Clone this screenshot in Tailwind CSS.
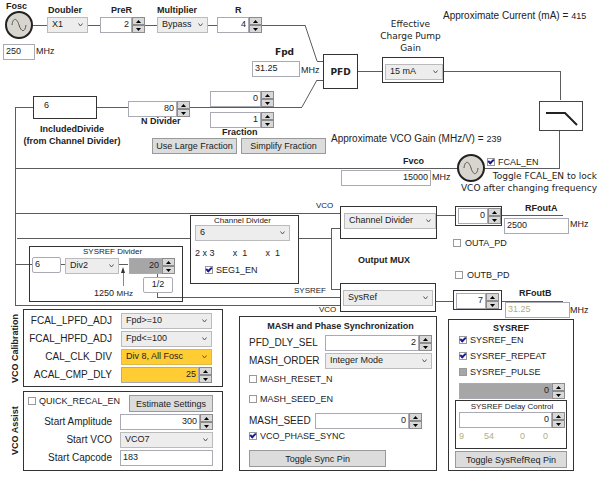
<!DOCTYPE html>
<html lang="en">
<head>
  <meta charset="UTF-8" />
  <title>PLL Configuration</title>
  <script src="https://cdn.jsdelivr.net/npm/@tailwindcss/browser@4"></script>
</head>
<body class="bg-white">
  <main class="font-['Liberation_Sans',Arial,sans-serif] text-[9px] leading-[12px] text-[#222] pb-2
    [&_select]:appearance-none [&_select]:block [&_select]:w-full [&_select]:h-[16px] [&_select]:pl-1 [&_select]:pb-[2px] [&_select]:border
    [&_input[type=text]]:block [&_input[type=text]]:min-w-0 [&_input[type=text]]:w-full [&_input[type=text]]:h-[16px] [&_input[type=text]]:px-[2px] [&_input[type=text]]:pb-[3px] [&_input[type=text]]:border [&_input[type=text]]:border-[#aaaab4]
    [&_input[type=checkbox]]:appearance-none [&_input[type=checkbox]]:shrink-0 [&_input[type=checkbox]]:size-[8px] [&_input[type=checkbox]]:border [&_input[type=checkbox]]:border-[#999]
    [&_input:checked]:before:block [&_input:checked]:before:w-[6px] [&_input:checked]:before:h-[4px] [&_input:checked]:before:border-l-2 [&_input:checked]:before:border-b-2 [&_input:checked]:before:border-[#1a1a90] [&_input:checked]:before:-rotate-45
    [&_label]:whitespace-nowrap">

    <!-- Signal path -->
    <section class="relative h-[309px]">
      <svg class="absolute left-0 top-0 overflow-visible" width="600" height="309" fill="none" stroke="#5c5c5c" shape-rendering="crispEdges">
        <path d="M32 25H217M262 25H305M317 61H323M317 80H323M358 71H382M444 71H560V100M33 107H15V305H340M97 107H128M190 107H302M15 168H458M485 168H559V130M15 213H340M17 238H190M298 238H331M340 228H331V289H340M15 264H32M61 264H65M119 264H128M157 274V297H340M436 215H455M501 215H563M436 301H453M501 301H563" />
        <path d="M305 25L317 61M302 107L317 80" shape-rendering="auto" />
        <path d="M123 286V270" stroke="#888" />
        <path d="M121 273L123 267L125 273Z" fill="#333" stroke="none" shape-rendering="auto" />
        <g shape-rendering="auto">
          <circle cx="19" cy="25" r="13" fill="#d8d4ce" stroke="#222" stroke-width="2" />
          <path d="M12 25C13 17 17 18 19 25S25 33 26 25" stroke="#555" />
          <circle cx="471" cy="168" r="13" fill="#d8d4ce" stroke="#222" stroke-width="2" />
          <path d="M464 168C465 160 469 161 471 168S477 176 478 168" stroke="#555" />
        </g>
        <rect x="539" y="101" width="43" height="29" fill="#fff" stroke="#444" />
        <path d="M546 113H565L577 125" stroke="#222" stroke-width="2" shape-rendering="auto" />
      </svg>

      <!-- Reference input -->
      <label for="fosc" class="absolute left-[6px] top-0 font-bold">Fosc</label>
      <div class="absolute left-[3px] top-[44px] w-[32px]"><input type="text" id="fosc" value="250"></div>
      <span class="absolute left-[36px] top-[45px]">MHz</span>

      <label for="doubler" class="absolute left-[48px] top-[4px] font-bold">Doubler</label>
      <div data-combo class="absolute left-[47px] top-[17px] w-[41px]"><select id="doubler" class="bg-[#ededed] border-[#bbb]"><option>X1</option><option>X2</option></select></div>

      <label for="prer" class="absolute left-[111px] top-[4px] font-bold">PreR</label>
      <div data-spin class="absolute left-[100px] top-[17px] w-[45px] flex"><input type="text" id="prer" value="2" class="text-right bg-white"></div>

      <label for="mult" class="absolute left-[157px] top-[4px] font-bold">Multiplier</label>
      <div data-combo class="absolute left-[157px] top-[17px] w-[51px]"><select id="mult" class="bg-[#ededed] border-[#bbb]"><option>Bypass</option></select></div>

      <label for="r" class="absolute left-[235px] top-[4px] font-bold">R</label>
      <div data-spin class="absolute left-[217px] top-[17px] w-[45px] flex"><input type="text" id="r" value="4" class="text-right bg-white"></div>

      <!-- Phase detector and charge pump -->
      <label for="fpd" class="absolute left-[275px] top-[46px] font-['DejaVu_Sans',sans-serif] font-bold">Fpd</label>
      <div class="absolute left-[252px] top-[61px] w-[48px]"><input type="text" id="fpd" value="31.25"></div>
      <span class="absolute left-[301px] top-[64px]">MHz</span>
      <div class="absolute left-[323px] top-[54px] w-[35px] h-[35px] border border-[#333] flex items-center justify-center font-['DejaVu_Sans',sans-serif] font-bold">PFD</div>

      <label for="cpg" class="absolute left-[378px] top-[18px] w-[65px] text-center font-['DejaVu_Sans',sans-serif]">Effective<br>Charge Pump<br>Gain</label>
      <div class="absolute left-[382px] top-[57px] w-[62px] h-[26px] border border-[#333] pl-[2px] pt-[6px]">
        <div data-combo class="relative"><select id="cpg" class="bg-[#ededed] border-[#bbb]"><option>15 mA</option></select></div>
      </div>
      <p class="absolute left-[443px] top-[10px] flex gap-[3px] whitespace-nowrap"><span class="text-[10px]">Approximate Current (mA) =</span><output>415</output></p>

      <!-- Feedback divider -->
      <div class="absolute left-[33px] top-[96px] w-[64px] h-[23px] border border-[#333] bg-white pl-[10px] pt-[2px]">6</div>
      <p class="absolute left-[22px] top-[123px] w-[100px] text-center font-bold whitespace-nowrap">IncludedDivide<br>(from Channel Divider)</p>
      <div data-spin class="absolute left-[128px] top-[101px] w-[62px] flex"><input type="text" id="ndiv" value="80" class="text-right bg-white"></div>
      <label for="ndiv" class="absolute left-[141px] top-[115px] font-bold">N Divider</label>
      <div data-spin class="absolute left-[210px] top-[91px] w-[64px] flex"><input type="text" id="num" value="0" class="text-right bg-white" aria-label="Numerator"></div>
      <div data-spin class="absolute left-[210px] top-[112px] w-[64px] flex"><input type="text" id="den" value="1" class="text-right bg-white"></div>
      <label for="den" class="absolute left-[222px] top-[126px] font-bold">Fraction</label>
      <div class="absolute left-[152px] top-[138px] flex gap-1">
        <button class="w-[85px] h-[16px] border border-[#999] bg-[#dcdcdc] whitespace-nowrap">Use Large Fraction</button>
        <button class="w-[85px] h-[16px] border border-[#999] bg-[#dcdcdc] whitespace-nowrap">Simplify Fraction</button>
      </div>

      <!-- VCO -->
      <p class="absolute left-[331px] top-[133px] flex gap-[3px] whitespace-nowrap"><span class="text-[10px]">Approximate VCO Gain (MHz/V) =</span><output>239</output></p>
      <label for="fvco" class="absolute left-[403px] top-[155px] font-bold">Fvco</label>
      <div class="absolute left-[341px] top-[170px] w-[90px]"><input type="text" id="fvco" value="15000" class="text-right bg-white"></div>
      <span class="absolute left-[432px] top-[171px]">MHz</span>
      <label class="absolute left-[487px] top-[156px] flex items-center gap-[3px]"><input type="checkbox" checked>FCAL_EN</label>
      <p class="absolute left-[454px] top-[170px] w-[143px] text-right whitespace-nowrap font-['DejaVu_Sans',sans-serif]">Toggle FCAL_EN to lock<br>VCO after changing frequency</p>

      <!-- SYSREF divider -->
      <div class="absolute left-[29px] top-[246px] w-[154px] h-[56px] border border-[#333]"></div>
      <span class="absolute left-[83px] top-[246px] text-[8px]">SYSREF Divider</span>
      <div class="absolute left-[32px] top-[257px] w-[29px]"><input type="text" value="6" class="bg-white rounded-xs" aria-label="SYSREF input divide"></div>
      <div data-combo class="absolute left-[65px] top-[258px] w-[54px]"><select class="bg-[#ededed] border-[#bbb]" aria-label="SYSREF pre-divider"><option>Div2</option></select></div>
      <div data-spin class="absolute left-[129px] top-[258px] w-[46px] flex"><input type="text" value="20" class="text-right bg-[#a6a6a6]" aria-label="SYSREF divider"></div>
      <div class="absolute left-[143px] top-[277px] w-[30px]"><input type="text" value="1/2" class="text-center bg-white rounded-xs" aria-label="SYSREF ratio"></div>
      <span class="absolute left-[94px] top-[287px] whitespace-nowrap">1250 <span class="text-[8px]">MHz</span></span>

      <!-- Channel divider -->
      <div class="absolute left-[190px] top-[215px] w-[109px] h-[69px] border border-[#333] pl-1 pr-2">
        <label for="chdiv" class="block h-[9px] leading-[9px] text-[8px] text-center whitespace-pre">Channel  Divider</label>
        <div data-combo class="relative"><select id="chdiv" class="bg-[#ededed] border-[#bbb]"><option>6</option></select></div>
        <p class="flex justify-between pr-[10px] mt-[6px]"><span>2 x 3</span><span>x&nbsp; 1</span><span>x&nbsp; 1</span></p>
        <label class="flex items-center gap-[3px] pl-[10px] mt-[5px]"><input type="checkbox" checked>SEG1_EN</label>
      </div>
      <span class="absolute left-[316px] top-[200px] text-[8px]">VCO</span>
      <span class="absolute left-[294px] top-[285px] text-[8px]">SYSREF</span>
      <span class="absolute left-[319px] top-[304px] text-[8px]">VCO</span>

      <!-- Output MUX -->
      <div class="absolute left-[340px] top-[206px] w-[97px] h-[33px] border border-[#333] bg-white pl-[3px] pt-[6px]">
        <div data-combo class="relative"><select class="bg-[#ededed] border-[#bbb]" aria-label="Output MUX A"><option>Channel Divider</option></select></div>
      </div>
      <p class="absolute left-[358px] top-[254px] font-bold whitespace-nowrap">Output MUX</p>
      <div class="absolute left-[340px] top-[283px] w-[96px] h-[29px] border border-[#333] bg-white px-[2px] pt-[6px]">
        <div data-combo class="relative"><select class="bg-[#ededed] border-[#bbb]" aria-label="Output MUX B"><option>SysRef</option></select></div>
      </div>

      <!-- RF outputs -->
      <div class="absolute left-[455px] top-[206px] w-[47px] h-[20px] border border-[#333] bg-white pl-[2px] pt-px">
        <div data-spin class="flex"><input type="text" value="0" class="text-right bg-white" aria-label="OUTA power"></div>
      </div>
      <label for="rfa" class="absolute left-[525px] top-[202px] font-bold">RFoutA</label>
      <div class="absolute left-[504px] top-[218px] w-[65px]"><input type="text" id="rfa" value="2500" class="bg-white"></div>
      <span class="absolute left-[570px] top-[218px]">MHz</span>
      <label class="absolute left-[453px] top-[237px] flex items-center gap-1"><input type="checkbox">OUTA_PD</label>
      <label class="absolute left-[455px] top-[269px] flex items-center gap-1"><input type="checkbox">OUTB_PD</label>
      <div class="absolute left-[453px] top-[290px] w-[49px] h-[20px] border border-[#333] bg-white px-[2px] pt-[2px]">
        <div data-spin class="flex"><input type="text" value="7" class="text-right bg-white" aria-label="OUTB power"></div>
      </div>
      <label for="rfb" class="absolute left-[519px] top-[287px] font-bold">RFoutB</label>
      <div class="absolute left-[505px] top-[302px] w-[65px]"><input type="text" id="rfb" value="31.25" class="bg-white text-[#b2ae80]"></div>
      <span class="absolute left-[570px] top-[304px]">MHz</span>
    </section>

    <!-- Register panels -->
    <section class="grid grid-cols-[minmax(0,217fr)_minmax(0,214fr)_minmax(0,137fr)] items-end pl-[6px] pr-[35px]">
      <div class="flex flex-col gap-1">
        <div class="flex">
          <h2 class="w-[17px] flex items-center justify-center font-bold whitespace-nowrap [writing-mode:vertical-rl] rotate-180">VCO Calibration</h2>
          <div class="flex-1 border border-[#333] grid grid-cols-[88px_1fr] items-center gap-x-[9px] gap-y-[2px] pt-[3px] pb-[3px] pr-[10px] [&>label]:text-[10px] [&>label]:text-right">
            <label for="lpfd">FCAL_LPFD_ADJ</label>
            <div data-combo class="relative"><select id="lpfd" class="bg-[#ededed] border-[#bbb]"><option>Fpd&gt;=10</option></select></div>
            <label for="hpfd">FCAL_HPFD_ADJ</label>
            <div data-combo class="relative"><select id="hpfd" class="bg-[#ededed] border-[#bbb]"><option>Fpd&lt;=100</option></select></div>
            <label for="calclk">CAL_CLK_DIV</label>
            <div data-combo class="relative"><select id="calclk" class="bg-[#ffcc33] border-[#ddb84a]"><option>Div 8, All Fosc</option></select></div>
            <label for="acal">ACAL_CMP_DLY</label>
            <div data-spin class="flex"><input type="text" id="acal" value="25" class="text-right bg-[#ffcc33]"></div>
          </div>
        </div>
        <div class="flex">
          <h2 class="w-[17px] flex items-center justify-center font-bold whitespace-nowrap [writing-mode:vertical-rl] rotate-180">VCO Assist</h2>
          <div class="flex-1 border border-[#333] pt-[3px] pb-[4px] pr-[9px]">
            <div class="flex items-start justify-between pl-1">
              <label class="flex items-center gap-[3px]"><input type="checkbox">QUICK_RECAL_EN</label>
              <button class="w-[84px] h-[17px] border border-[#999] bg-[#dcdcdc]">Estimate Settings</button>
            </div>
            <div class="grid grid-cols-[88px_1fr] items-center gap-x-2 gap-y-[2px] mt-[2px] [&>label]:text-[10px] [&>label]:text-right">
              <label for="amp">Start Amplitude</label>
              <div data-spin class="flex"><input type="text" id="amp" value="300" class="text-right bg-white"></div>
              <label for="svco">Start VCO</label>
              <div data-combo class="relative"><select id="svco" class="bg-[#ededed] border-[#bbb]"><option>VCO7</option></select></div>
              <label for="cap">Start Capcode</label>
              <input type="text" id="cap" value="183">
            </div>
          </div>
        </div>
      </div>

      <div class="ml-4 border border-[#333] pl-[9px] pr-1 pt-[3px] pb-[3px]">
        <h2 class="font-bold text-center whitespace-nowrap">MASH and Phase Synchronization</h2>
        <div class="grid grid-cols-[73px_1fr] items-center gap-x-[3px] gap-y-[2px] mt-[3px] [&>label]:text-[10px]">
          <label for="dly">PFD_DLY_SEL</label>
          <div data-spin class="flex"><input type="text" id="dly" value="2" class="text-right bg-white"></div>
          <label for="order">MASH_ORDER</label>
          <div data-combo class="relative"><select id="order" class="bg-[#ededed] border-[#bbb]"><option>Integer Mode</option></select></div>
        </div>
        <label class="flex items-center gap-[3px] mt-1"><input type="checkbox">MASH_RESET_N</label>
        <label class="flex items-center gap-[3px] mt-2"><input type="checkbox">MASH_SEED_EN</label>
        <div class="grid grid-cols-[63px_1fr] items-center gap-x-[3px] mt-2 pr-[10px]">
          <label for="seed" class="text-[10px]">MASH_SEED</label>
          <div data-spin class="flex"><input type="text" id="seed" value="0" class="text-right bg-white"></div>
        </div>
        <label class="flex items-center gap-[3px] mt-px"><input type="checkbox" checked>VCO_PHASE_SYNC</label>
        <button class="block w-3/4 h-[17px] mt-2 border border-[#999] bg-[#dcdcdc]">Toggle Sync Pin</button>
      </div>

      <div class="ml-[11px] border border-[#333] px-[6px] pt-[2px] pb-[2px]">
        <h2 class="font-bold text-center">SYSREF</h2>
        <div class="flex flex-col gap-1 pl-1">
          <label class="flex items-center gap-[3px]"><input type="checkbox" checked>SYSREF_EN</label>
          <label class="flex items-center gap-[3px]"><input type="checkbox" checked>SYSREF_REPEAT</label>
          <label class="flex items-center gap-[3px]"><input type="checkbox" class="bg-[#a6a6a6]">SYSREF_PULSE</label>
        </div>
        <div data-spin class="flex mt-[5px] pl-1 pr-[2px]"><input type="text" value="0" class="text-right bg-[#a6a6a6]" aria-label="SYSREF pulse count"></div>
        <div class="border border-[#333] h-[49px] mt-px pl-[3px] pr-px">
          <label for="delay" class="block text-[8px] leading-[11px] text-center">SYSREF Delay Control</label>
          <div data-spin class="flex"><input type="text" id="delay" value="0" class="text-right bg-white"></div>
          <p class="grid grid-cols-[25px_36px_23px_1fr] mt-[2px] text-[#b2ae80]"><span>9</span><span>54</span><span>0</span><span>0</span></p>
        </div>
        <button class="block w-full h-[17px] mt-[2px] border border-[#999] bg-[#dcdcdc] whitespace-nowrap">Toggle SysRefReq Pin</button>
      </div>
    </section>
  </main>

  <script>
    // Up/down buttons next to each numeric field
    document.querySelectorAll("[data-spin]").forEach((box) => {
      const input = box.querySelector("input");
      box.insertAdjacentHTML("beforeend", `
        <span class="w-[13px] h-[16px] shrink-0 flex flex-col">
          <button aria-label="Up" class="flex-1 flex items-center justify-center bg-[#d8d8d8] border border-[#8c8c8c]"><svg width="5" height="3"><path d="M0 3L2.5 0L5 3Z" /></svg></button>
          <button aria-label="Down" class="flex-1 flex items-center justify-center bg-[#d8d8d8] border border-[#8c8c8c]"><svg width="5" height="3"><path d="M0 0L2.5 3L5 0Z" /></svg></button>
        </span>`);
      const [up, down] = box.querySelectorAll("button");
      up.onclick = () => (input.value = Number(input.value) + 1);
      down.onclick = () => (input.value = Number(input.value) - 1);
    });

    // Arrow on each drop-down
    document.querySelectorAll("[data-combo]").forEach((box) => {
      box.insertAdjacentHTML("beforeend", `
        <svg class="absolute right-[5px] top-[6px] pointer-events-none" width="5" height="4" fill="none" stroke="#555"><path d="M.5 .5L2.5 3L4.5 .5" /></svg>`);
    });
  </script>
</body>
</html>
